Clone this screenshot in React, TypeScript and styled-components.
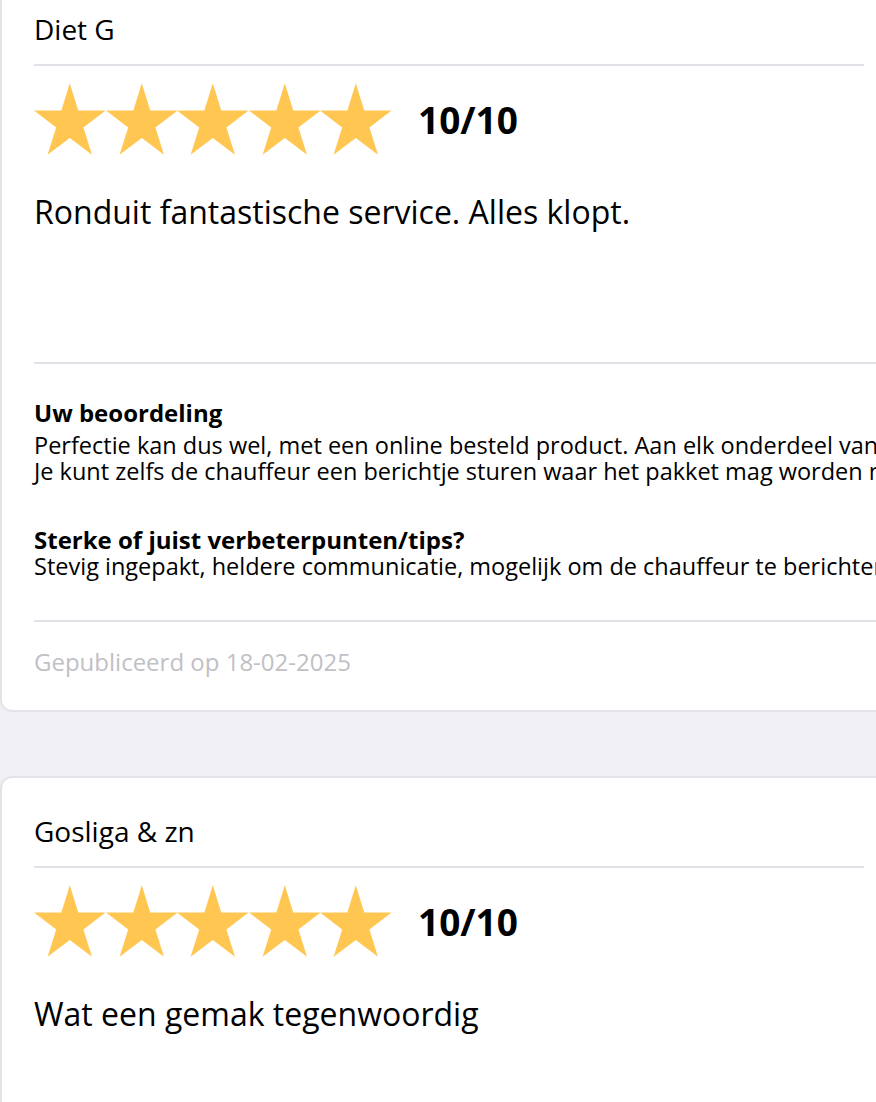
import styled, { createGlobalStyle } from "styled-components";

const GlobalStyle = createGlobalStyle`
  html, body {
    margin: 0;
    padding: 0;
    overflow: hidden;
    background: #f0eff4;
    font-family: "Open Sans", "Liberation Sans", sans-serif;
    color: #000;
  }
`;

const Page = styled.div`
  display: flex;
  flex-direction: column;
  gap: 64px;
  margin-top: -26px;
  width: 1400px;
`;

const Card = styled.div`
  background: #fff;
  border: 2px solid #e4e3e9;
  border-radius: 12px;
  padding: 35px 32px;
  display: flex;
  flex-direction: column;
`;

const Name = styled.div`
  font-size: 28px;
  line-height: 36px;
  width: 830px;
  padding-bottom: 17px;
  border-bottom: 2px solid #e2e1e8;
`;

const RatingRow = styled.div`
  display: flex;
  align-items: center;
  margin-top: 17px;
  height: 72px;
`;

const Stars = styled.div`
  display: flex;
  width: 358px;
  justify-content: space-between;
`;

const Score = styled.div`
  margin-left: 26px;
  font-size: 37px;
  font-weight: 700;
  line-height: 1;
  padding-top: 1px;
`;

const Title = styled.div<{ $minHeight?: number }>`
  margin-top: 37px;
  font-size: 32px;
  line-height: 40px;
  min-height: ${(p) => p.$minHeight ?? 40}px;
  white-space: nowrap;
`;

const Divider = styled.div`
  height: 2px;
  background: #e2e1e8;
`;

const Section = styled.div<{ $top: number }>`
  margin-top: ${(p) => p.$top}px;
`;

const SectionHead = styled.div`
  font-size: 24px;
  font-weight: 700;
  line-height: 26px;
`;

const SectionText = styled.div<{ $gap: number }>`
  margin-top: ${(p) => p.$gap}px;
  font-size: 23.5px;
  line-height: 26px;
  white-space: nowrap;
`;

const Published = styled.div`
  margin-top: 27px;
  font-size: 24px;
  line-height: 26px;
  color: #c1c0c6;
`;

const Star = () => (
  <svg width="72" height="72" viewBox="0 0 72 72">
    <polygon
      fill="#ffc752"
      points="36,0 44.5,27.5 72,27.5 49.7,44.5 58.3,72 36,55 13.7,72 22.3,44.5 0,27.5 27.5,27.5"
    />
  </svg>
);

const Rating = ({ score }: { score: string }) => (
  <RatingRow>
    <Stars>
      {[0, 1, 2, 3, 4].map((i) => (
        <Star key={i} />
      ))}
    </Stars>
    <Score>{score}</Score>
  </RatingRow>
);

export default function App() {
  return (
    <>
      <GlobalStyle />
      <Page>
        <Card>
          <Name>Diet G</Name>
          <Rating score="10/10" />
          <Title $minHeight={170}>Ronduit fantastische service. Alles klopt.</Title>
          <Divider />
          <Section $top={36}>
            <SectionHead>Uw beoordeling</SectionHead>
            <SectionText $gap={6}>
              Perfectie kan dus wel, met een online besteld product. Aan elk onderdeel van het proces is gedacht.
              <br />
              Je kunt zelfs de chauffeur een berichtje sturen waar het pakket mag worden neergezet.
            </SectionText>
          </Section>
          <Section $top={43}>
            <SectionHead>Sterke of juist verbeterpunten/tips?</SectionHead>
            <SectionText $gap={0}>
              Stevig ingepakt, heldere communicatie, mogelijk om de chauffeur te berichten.
            </SectionText>
          </Section>
          <Section $top={41}>
            <Divider />
          </Section>
          <Published>Gepubliceerd op 18-02-2025</Published>
        </Card>
        <Card>
          <Name>Gosliga &amp; zn</Name>
          <Rating score="10/10" />
          <Title $minHeight={170}>Wat een gemak tegenwoordig</Title>
        </Card>
      </Page>
    </>
  );
}
